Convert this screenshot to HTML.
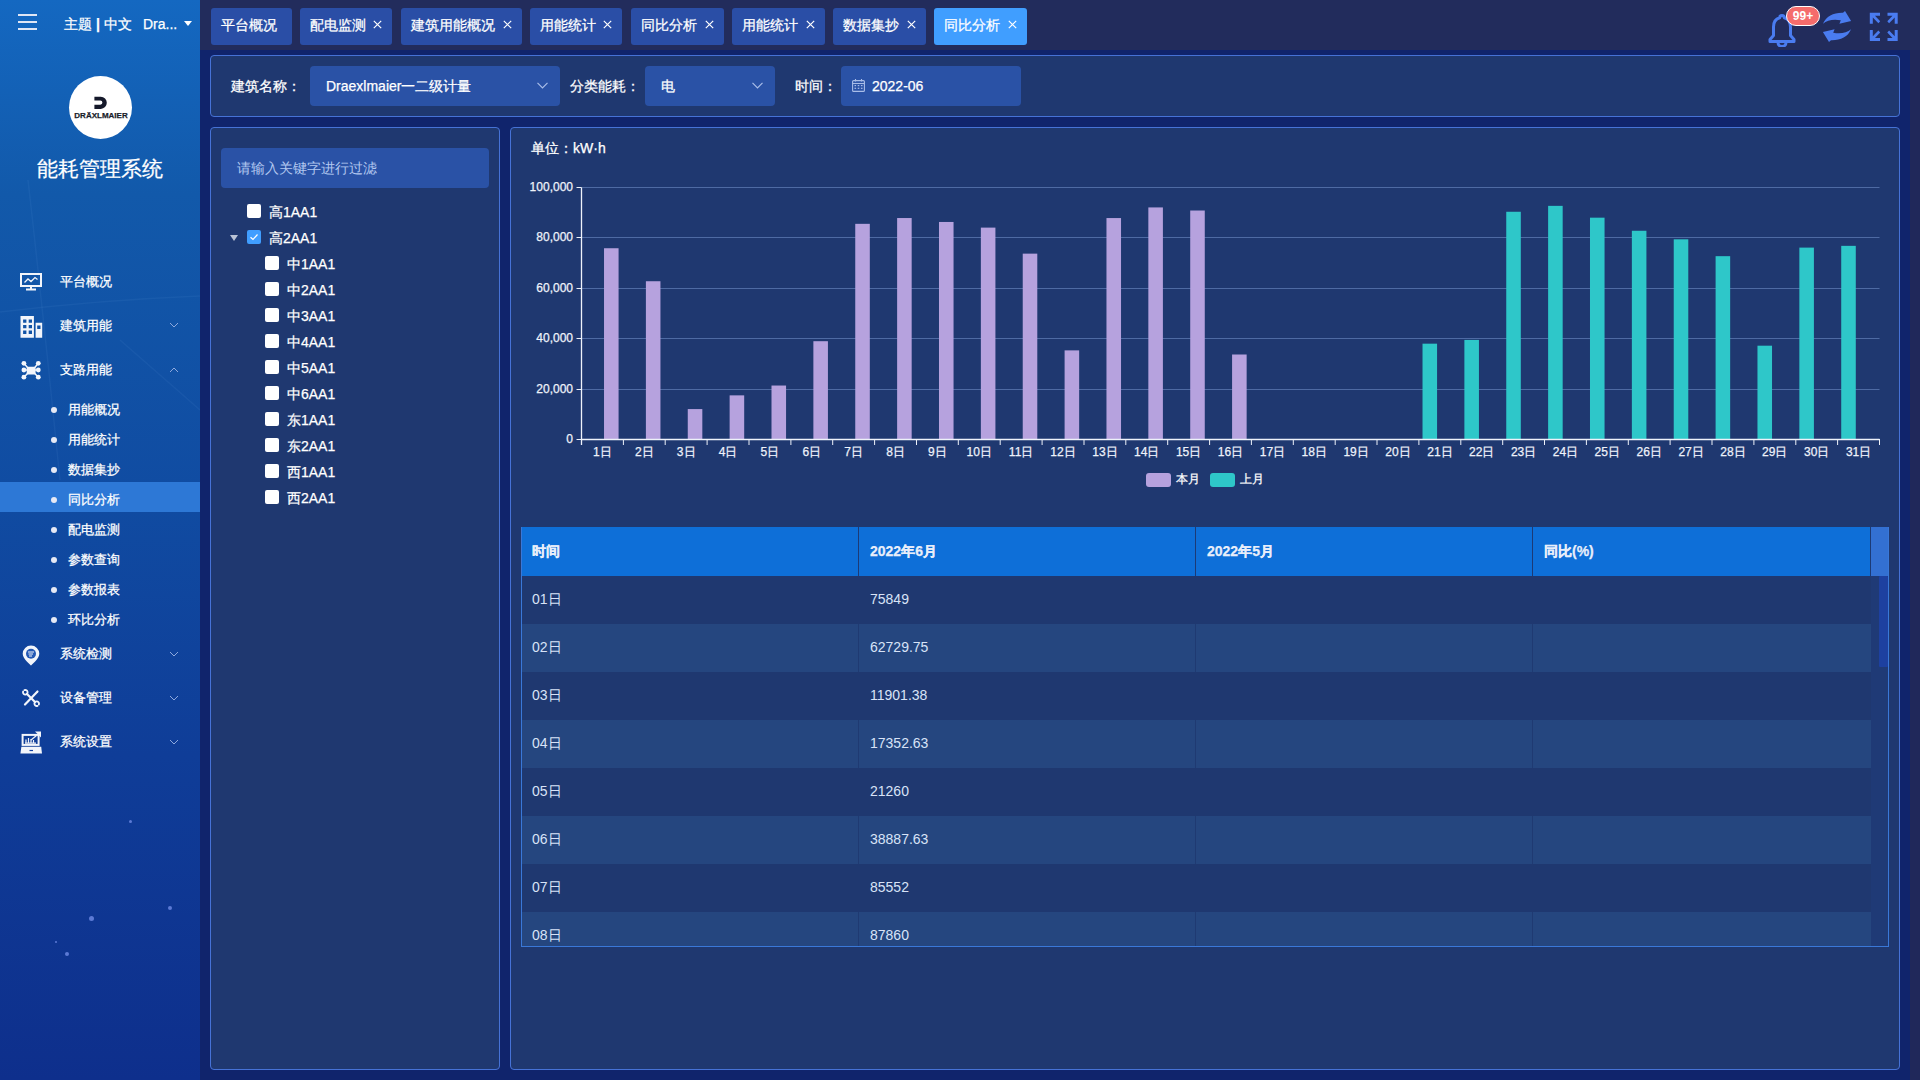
<!DOCTYPE html>
<html><head><meta charset="utf-8">
<style>
*{box-sizing:border-box;margin:0;padding:0}
html,body{width:1920px;height:1080px;overflow:hidden}
body{position:relative;background:#10246c;font-family:"Liberation Sans",sans-serif;color:#fff;-webkit-text-stroke:0.25px currentColor}
.abs{position:absolute}
.t{position:absolute;white-space:nowrap}
#side{left:0;top:0;width:200px;height:1080px;background:linear-gradient(180deg,#1468c1 0%,#1259aa 18%,#104ca2 45%,#0f3d98 70%,#0e2f8c 100%);overflow:hidden}
#hdr{left:200px;top:0;width:1720px;height:50px;background:#222c5c}
#rstrip{left:1910px;top:50px;width:10px;height:1030px;background:#20285a}
.tab{position:absolute;top:8px;height:37px;background:#2a4ea6;border-radius:3px;font-size:14px;line-height:34px;padding-left:10px;color:#fff;white-space:nowrap}
.tab.act{background:#409eff}
.panel{position:absolute;background:#1f3870;border:1px solid #4672d6;border-radius:4px}
.mi{position:absolute;left:60px;font-size:13px;line-height:16px;color:#fff;white-space:nowrap}
.sub{position:absolute;left:68px;font-size:13px;line-height:16px;color:#fff;white-space:nowrap}
.dot{position:absolute;left:51px;width:6px;height:6px;border-radius:3px;background:#e6e9f5}
.chev{position:absolute;left:169px;width:10px;height:10px}
.inp{background:#2a52a6;border-radius:4px}
.cb{position:absolute;width:14px;height:14px;background:#fff;border-radius:2px}
.cb.on{background:#409eff}
.ti{position:absolute;font-size:14px;line-height:16px;white-space:nowrap;color:#fff}
.yl{position:absolute;left:473px;width:100px;text-align:right;font-size:12px;line-height:14px;color:#eef2fa}
.xl{position:absolute;width:50px;text-align:center;font-size:12px;line-height:14px;color:#eef2fa}
.lg{font-size:12px;line-height:16px;color:#fff}
.td{position:absolute;font-size:14px;line-height:16px;color:#d8e3f7;white-space:nowrap;-webkit-text-stroke:0}
.th{position:absolute;font-size:14px;line-height:16px;color:#e8eefa;font-weight:bold;white-space:nowrap}
</style></head><body>
<div id="side" class="abs">
<div class="abs" style="left:18px;top:14px;width:19px;height:2px;background:#dfe6f5"></div>
<div class="abs" style="left:18px;top:21px;width:19px;height:2px;background:#dfe6f5"></div>
<div class="abs" style="left:18px;top:28px;width:19px;height:2px;background:#dfe6f5"></div>
<div class="t" style="left:64px;top:16px;font-size:14px;line-height:16px">主题 <b style="font-weight:bold">|</b> 中文</div>
<div class="t" style="left:143px;top:16px;font-size:14px;line-height:16px">Dra...</div>
<div class="abs" style="left:184px;top:21px;width:0;height:0;border-left:4.5px solid transparent;border-right:4.5px solid transparent;border-top:5px solid #fff"></div>
<div class="abs" style="left:69px;top:76px;width:63px;height:63px;border-radius:50%;background:#fff"></div>
<svg class="abs" style="left:94px;top:96px" width="14" height="14" viewBox="0 0 14 14"><path d="M0.4 0.7H6.8A6 6.1 0 0 1 6.8 12.9H0.4V8.7H6.3A2.1 2.1 0 0 0 6.3 4.5H0.4Z" fill="#15192a"/></svg>
<div class="abs" style="left:73px;top:111px;width:56px;text-align:center;font-size:8px;line-height:9px;font-weight:bold;color:#1a1d2b;letter-spacing:0">DRÄXLMAIER</div>
<svg class="abs" style="left:0;top:0" width="200" height="1080"><g fill="none" stroke="#9fc4ff" stroke-opacity="0.06" stroke-width="1.5"><path d="M28 180Q45 330 60 480"/><path d="M0 312Q100 300 200 296"/><path d="M120 340L200 410"/></g></svg>
<div class="abs" style="left:128.5px;top:819.5px;width:3.0px;height:3.0px;border-radius:50%;background:#6a86e0;opacity:.85"></div>
<div class="abs" style="left:88.5px;top:915.5px;width:5.0px;height:5.0px;border-radius:50%;background:#6a86e0;opacity:.85"></div>
<div class="abs" style="left:168px;top:906px;width:4px;height:4px;border-radius:50%;background:#6a86e0;opacity:.85"></div>
<div class="abs" style="left:55px;top:941px;width:2px;height:2px;border-radius:50%;background:#6a86e0;opacity:.85"></div>
<div class="abs" style="left:65px;top:952px;width:4px;height:4px;border-radius:50%;background:#6a86e0;opacity:.85"></div>
<div class="t" style="left:37px;top:157px;font-size:21px;line-height:24px">能耗管理系统</div>
<svg class="abs" style="left:20px;top:273px" width="22" height="18" viewBox="0 0 22 18"><rect x="1" y="1" width="20" height="12" fill="none" stroke="#f2f5fb" stroke-width="2"/><path d="M4.5 9.5L8 6L11 8.5L15 4.5L17.5 6.5" fill="none" stroke="#f2f5fb" stroke-width="1.3"/><rect x="10" y="13" width="2" height="3" fill="#f2f5fb"/><rect x="6" y="15.5" width="10" height="2" fill="#f2f5fb"/></svg>
<svg class="abs" style="left:20px;top:316px" width="23" height="22" viewBox="0 0 23 22"><path d="M0.5 0H13.9V21.8H0.5Z M3.1 3.4V6.8H6.4V3.4Z M8.7 3.4V6.8H12V3.4Z M3.1 9V12.3H6.4V9Z M8.7 9V12.3H12V9Z M3.1 14.5V17.9H6.4V14.5Z M8.7 14.5V17.9H12V14.5Z" fill="#f2f5fb" fill-rule="evenodd"/><path d="M15.6 6.8H22.2V21.8H15.6Z M17.2 9.5V12.9H20.5V9.5Z" fill="#f2f5fb" fill-rule="evenodd"/></svg>
<svg class="abs" style="left:20px;top:360px" width="22" height="21" viewBox="0 0 22 21"><rect x="6.7" y="6.7" width="8.9" height="7.7" rx="1" fill="#f2f5fb"/><g stroke="#f2f5fb" stroke-width="1.5" fill="none"><path d="M3.9 3.3L7.5 7.5M18.3 3.3L14.8 7.5M3.9 17.2L7.5 13.5M18.3 17.2L14.8 13.5M3.9 10H7M15 10H18.3"/></g><circle cx="3.9" cy="3.3" r="2.4" fill="#f2f5fb"/><circle cx="18.3" cy="3.3" r="2.4" fill="#f2f5fb"/><circle cx="3.9" cy="10" r="2.4" fill="#f2f5fb"/><circle cx="18.3" cy="10" r="2.4" fill="#f2f5fb"/><circle cx="3.9" cy="17.2" r="2.4" fill="#f2f5fb"/><circle cx="18.3" cy="17.2" r="2.4" fill="#f2f5fb"/></svg>
<svg class="abs" style="left:22px;top:645px" width="18" height="21" viewBox="0 0 18 21"><path d="M9 0.5A8.3 8.3 0 0 0 0.7 8.8C0.7 14 9 20.5 9 20.5S17.3 14 17.3 8.8A8.3 8.3 0 0 0 9 0.5Z" fill="#f2f5fb"/><circle cx="9" cy="8.8" r="5" fill="#2358b5"/><path d="M6 7H12M6.5 9H11M7 11H10" stroke="#f2f5fb" stroke-width="1"/></svg>
<svg class="abs" style="left:22px;top:689px" width="18" height="19" viewBox="0 0 18 19"><g stroke="#f2f5fb" stroke-linecap="round" fill="none"><path d="M5 5L13 13" stroke-width="2.2"/><path d="M15.5 2.5L3 15.5" stroke-width="2.2"/><path d="M1.14 2.51A2.3 2.3 0 1 0 2.51 1.14" stroke-width="1.8"/><path d="M16.86 15.49A2.3 2.3 0 1 0 15.49 16.86" stroke-width="1.8"/></g></svg>
<svg class="abs" style="left:20px;top:730px" width="23" height="25" viewBox="0 0 23 25"><rect x="2.6" y="4.9" width="16" height="10" fill="none" stroke="#f2f5fb" stroke-width="2"/><path d="M6 13V9.5M8.5 13V8M11 13V9M13.5 13V10M5 13.2H16" stroke="#f2f5fb" stroke-width="1.2"/><path d="M11 10L16.5 5.5" stroke="#f2f5fb" stroke-width="1.2"/><path d="M15 1.5H21V7.5Z" fill="#f2f5fb"/><path d="M1.4 16.7H21.2L22 23.6H0.4Z" fill="#f2f5fb"/><path d="M9.5 20.5H13" stroke="#1240a0" stroke-width="1.2"/></svg>
<div class="mi" style="top:274px">平台概况</div>
<div class="mi" style="top:318px">建筑用能</div>
<div class="mi" style="top:362px">支路用能</div>
<div class="mi" style="top:646px">系统检测</div>
<div class="mi" style="top:690px">设备管理</div>
<div class="mi" style="top:734px">系统设置</div>
<svg class="chev" style="top:320px" viewBox="0 0 10 10"><path d="M1 3L5 7L9 3" fill="none" stroke="#8ea9de" stroke-width="1"/></svg><svg class="chev" style="top:365px" viewBox="0 0 10 10"><path d="M1 7L5 3L9 7" fill="none" stroke="#8ea9de" stroke-width="1"/></svg><svg class="chev" style="top:649px" viewBox="0 0 10 10"><path d="M1 3L5 7L9 3" fill="none" stroke="#8ea9de" stroke-width="1"/></svg><svg class="chev" style="top:693px" viewBox="0 0 10 10"><path d="M1 3L5 7L9 3" fill="none" stroke="#8ea9de" stroke-width="1"/></svg><svg class="chev" style="top:737px" viewBox="0 0 10 10"><path d="M1 3L5 7L9 3" fill="none" stroke="#8ea9de" stroke-width="1"/></svg>
<div class="abs" style="left:0;top:482px;width:200px;height:30px;background:#2d78d6"></div>
<div class="dot" style="top:407px"></div><div class="sub" style="top:402px">用能概况</div>
<div class="dot" style="top:437px"></div><div class="sub" style="top:432px">用能统计</div>
<div class="dot" style="top:467px"></div><div class="sub" style="top:462px">数据集抄</div>
<div class="dot" style="top:497px"></div><div class="sub" style="top:492px">同比分析</div>
<div class="dot" style="top:527px"></div><div class="sub" style="top:522px">配电监测</div>
<div class="dot" style="top:557px"></div><div class="sub" style="top:552px">参数查询</div>
<div class="dot" style="top:587px"></div><div class="sub" style="top:582px">参数报表</div>
<div class="dot" style="top:617px"></div><div class="sub" style="top:612px">环比分析</div>
</div>
<div id="hdr" class="abs">
<div class="tab" style="left:11px;width:81px">平台概况</div>
<div class="tab" style="left:100px;width:92px">配电监测<svg class="abs" style="right:10px;top:12px" width="9" height="9" viewBox="0 0 9 9"><path d="M0.8 0.8L8.2 8.2M8.2 0.8L0.8 8.2" stroke="#fff" stroke-width="1.2"/></svg></div>
<div class="tab" style="left:201px;width:121px">建筑用能概况<svg class="abs" style="right:10px;top:12px" width="9" height="9" viewBox="0 0 9 9"><path d="M0.8 0.8L8.2 8.2M8.2 0.8L0.8 8.2" stroke="#fff" stroke-width="1.2"/></svg></div>
<div class="tab" style="left:330px;width:92px">用能统计<svg class="abs" style="right:10px;top:12px" width="9" height="9" viewBox="0 0 9 9"><path d="M0.8 0.8L8.2 8.2M8.2 0.8L0.8 8.2" stroke="#fff" stroke-width="1.2"/></svg></div>
<div class="tab" style="left:431px;width:93px">同比分析<svg class="abs" style="right:10px;top:12px" width="9" height="9" viewBox="0 0 9 9"><path d="M0.8 0.8L8.2 8.2M8.2 0.8L0.8 8.2" stroke="#fff" stroke-width="1.2"/></svg></div>
<div class="tab" style="left:532px;width:93px">用能统计<svg class="abs" style="right:10px;top:12px" width="9" height="9" viewBox="0 0 9 9"><path d="M0.8 0.8L8.2 8.2M8.2 0.8L0.8 8.2" stroke="#fff" stroke-width="1.2"/></svg></div>
<div class="tab" style="left:633px;width:93px">数据集抄<svg class="abs" style="right:10px;top:12px" width="9" height="9" viewBox="0 0 9 9"><path d="M0.8 0.8L8.2 8.2M8.2 0.8L0.8 8.2" stroke="#fff" stroke-width="1.2"/></svg></div>
<div class="tab act" style="left:734px;width:93px">同比分析<svg class="abs" style="right:10px;top:12px" width="9" height="9" viewBox="0 0 9 9"><path d="M0.8 0.8L8.2 8.2M8.2 0.8L0.8 8.2" stroke="#fff" stroke-width="1.2"/></svg></div>
<svg class="abs" style="left:1568px;top:13px" width="28" height="34" viewBox="0 0 28 34"><path d="M14 2.5C15.5 2.5 16.3 3.5 16.3 4.8C20.5 6 22.5 9.5 22.5 14V22.5L26 26.5V28.5H2V26.5L5.5 22.5V14C5.5 9.5 7.5 6 11.7 4.8C11.7 3.5 12.5 2.5 14 2.5Z" fill="none" stroke="#4a7cf0" stroke-width="3" stroke-linejoin="round"/><path d="M10 29.5A4 4 0 0 0 18 29.5" fill="none" stroke="#4a7cf0" stroke-width="3"/></svg>
<div class="abs" style="left:1586px;top:6px;width:34px;height:20px;border-radius:10px;background:#f56c6c;border:1px solid #fff;font-size:12px;line-height:18px;text-align:center;color:#fff;font-weight:bold;-webkit-text-stroke:0">99+</div>
<svg class="abs" style="left:1622px;top:10px" width="30" height="34" viewBox="0 0 30 34"><path d="M1 13.8C4 6 12 2.5 21 2.8L23 0.9L29.1 10.9L17.4 13.8L18.8 10.3C12 8.8 5 10 1 13.8Z" fill="#4a7cf0"/><path d="M29 19.2C26 27 18 30.5 9 30.2L7 32.1L0.9 22.1L12.6 19.2L11.2 22.7C18 24.2 25 23 29 19.2Z" fill="#4a7cf0"/></svg>
<svg class="abs" style="left:1669px;top:12px" width="30" height="30" viewBox="0 0 30 30"><g fill="#4a7cf0"><path id="q" d="M0.8 0.7H11V3.7H6L11.2 9.2L9.4 11.2L3.8 5.6V11.7H0.8Z"/><path d="M0.8 0.7H11V3.7H6L11.2 9.2L9.4 11.2L3.8 5.6V11.7H0.8Z" transform="translate(29.5,0) scale(-1,1)"/><path d="M0.8 0.7H11V3.7H6L11.2 9.2L9.4 11.2L3.8 5.6V11.7H0.8Z" transform="translate(0,29.8) scale(1,-1)"/><path d="M0.8 0.7H11V3.7H6L11.2 9.2L9.4 11.2L3.8 5.6V11.7H0.8Z" transform="translate(29.5,29.8) scale(-1,-1)"/></g></svg>
</div>
<div class="panel" style="left:210px;top:55px;width:1690px;height:62px"></div>
<div class="t" style="left:231px;top:78px;font-size:14px;line-height:16px">建筑名称：</div>
<div class="abs inp" style="left:310px;top:66px;width:250px;height:40px"></div>
<div class="t" style="left:326px;top:78px;font-size:14px;line-height:16px">Draexlmaier一二级计量</div>
<svg class="abs" style="left:537px;top:82px" width="11" height="7" viewBox="0 0 11 7"><path d="M0.5 0.8L5.5 5.8L10.5 0.8" fill="none" stroke="#a9bde8" stroke-width="1.2"/></svg>
<div class="t" style="left:570px;top:78px;font-size:14px;line-height:16px">分类能耗：</div>
<div class="abs inp" style="left:645px;top:66px;width:130px;height:40px"></div>
<div class="t" style="left:661px;top:78px;font-size:14px;line-height:16px">电</div>
<svg class="abs" style="left:752px;top:82px" width="11" height="7" viewBox="0 0 11 7"><path d="M0.5 0.8L5.5 5.8L10.5 0.8" fill="none" stroke="#a9bde8" stroke-width="1.2"/></svg>
<div class="t" style="left:795px;top:78px;font-size:14px;line-height:16px">时间：</div>
<div class="abs inp" style="left:841px;top:66px;width:180px;height:40px"></div>
<svg class="abs" style="left:852px;top:79px" width="13" height="13" viewBox="0 0 13 13"><rect x="0.6" y="1.6" width="11.8" height="10.8" rx="1" fill="none" stroke="#a9bde8" stroke-width="1.1"/><path d="M0.6 4.5H12.4" stroke="#a9bde8" stroke-width="1.1"/><path d="M3.5 0V2.5M9.5 0V2.5" stroke="#a9bde8" stroke-width="1.1"/><g fill="#a9bde8"><rect x="2.5" y="6" width="1.6" height="1.2"/><rect x="5.7" y="6" width="1.6" height="1.2"/><rect x="8.9" y="6" width="1.6" height="1.2"/><rect x="2.5" y="8.7" width="1.6" height="1.2"/><rect x="5.7" y="8.7" width="1.6" height="1.2"/><rect x="8.9" y="8.7" width="1.6" height="1.2"/></g></svg>
<div class="t" style="left:872px;top:78px;font-size:14px;line-height:16px">2022-06</div>
<div class="panel" style="left:210px;top:127px;width:290px;height:943px"></div>
<div class="abs inp" style="left:221px;top:148px;width:268px;height:40px"></div>
<div class="t" style="left:237px;top:160px;font-size:14px;line-height:16px;color:#b3c8f0;-webkit-text-stroke:0">请输入关键字进行过滤</div>
<div class="cb" style="left:247px;top:204px"></div><div class="ti" style="left:269px;top:204px">高1AA1</div>
<div class="abs" style="left:230px;top:235px;width:0;height:0;border-left:4.5px solid transparent;border-right:4.5px solid transparent;border-top:6px solid #b9c3d6"></div>
<div class="cb on" style="left:247px;top:230px"><svg width="14" height="14" viewBox="0 0 14 14" style="position:absolute;left:0;top:0"><path d="M3.5 7.2L6 9.5L10.5 4.5" fill="none" stroke="#fff" stroke-width="1.2"/></svg></div><div class="ti" style="left:269px;top:230px">高2AA1</div>
<div class="cb" style="left:265px;top:256px"></div><div class="ti" style="left:287px;top:256px">中1AA1</div>
<div class="cb" style="left:265px;top:282px"></div><div class="ti" style="left:287px;top:282px">中2AA1</div>
<div class="cb" style="left:265px;top:308px"></div><div class="ti" style="left:287px;top:308px">中3AA1</div>
<div class="cb" style="left:265px;top:334px"></div><div class="ti" style="left:287px;top:334px">中4AA1</div>
<div class="cb" style="left:265px;top:360px"></div><div class="ti" style="left:287px;top:360px">中5AA1</div>
<div class="cb" style="left:265px;top:386px"></div><div class="ti" style="left:287px;top:386px">中6AA1</div>
<div class="cb" style="left:265px;top:412px"></div><div class="ti" style="left:287px;top:412px">东1AA1</div>
<div class="cb" style="left:265px;top:438px"></div><div class="ti" style="left:287px;top:438px">东2AA1</div>
<div class="cb" style="left:265px;top:464px"></div><div class="ti" style="left:287px;top:464px">西1AA1</div>
<div class="cb" style="left:265px;top:490px"></div><div class="ti" style="left:287px;top:490px">西2AA1</div>
<div class="panel" style="left:510px;top:127px;width:1390px;height:943px"></div>
<div class="t" style="left:531px;top:140px;font-size:14px;line-height:16px">单位：kW·h</div>
<svg class="abs" style="left:0;top:0" width="1920" height="1080" viewBox="0 0 1920 1080"><line x1="581.5" y1="389.5" x2="1879.5" y2="389.5" stroke="#4e6aa3" stroke-width="1"/><line x1="581.5" y1="338.5" x2="1879.5" y2="338.5" stroke="#4e6aa3" stroke-width="1"/><line x1="581.5" y1="288.5" x2="1879.5" y2="288.5" stroke="#4e6aa3" stroke-width="1"/><line x1="581.5" y1="237.5" x2="1879.5" y2="237.5" stroke="#4e6aa3" stroke-width="1"/><line x1="581.5" y1="187.5" x2="1879.5" y2="187.5" stroke="#4e6aa3" stroke-width="1"/><rect x="604.02" y="248.24" width="14.56" height="190.76" fill="#b6a2de"/><rect x="645.89" y="281.23" width="14.56" height="157.77" fill="#b6a2de"/><rect x="687.76" y="409.07" width="14.56" height="29.93" fill="#b6a2de"/><rect x="729.63" y="395.36" width="14.56" height="43.64" fill="#b6a2de"/><rect x="771.50" y="385.53" width="14.56" height="53.47" fill="#b6a2de"/><rect x="813.37" y="341.20" width="14.56" height="97.80" fill="#b6a2de"/><rect x="855.25" y="223.84" width="14.56" height="215.16" fill="#b6a2de"/><rect x="897.12" y="218.03" width="14.56" height="220.97" fill="#b6a2de"/><rect x="938.99" y="221.96" width="14.56" height="217.04" fill="#b6a2de"/><rect x="980.86" y="227.61" width="14.56" height="211.39" fill="#b6a2de"/><rect x="1022.73" y="253.64" width="14.56" height="185.36" fill="#b6a2de"/><rect x="1064.60" y="350.37" width="14.56" height="88.63" fill="#b6a2de"/><rect x="1106.47" y="218.06" width="14.56" height="220.94" fill="#b6a2de"/><rect x="1148.34" y="207.42" width="14.56" height="231.58" fill="#b6a2de"/><rect x="1190.21" y="210.51" width="14.56" height="228.49" fill="#b6a2de"/><rect x="1232.08" y="354.50" width="14.56" height="84.50" fill="#b6a2de"/><rect x="1422.51" y="343.68" width="14.56" height="95.32" fill="#2ec7c9"/><rect x="1464.38" y="339.91" width="14.56" height="99.09" fill="#2ec7c9"/><rect x="1506.25" y="211.77" width="14.56" height="227.23" fill="#2ec7c9"/><rect x="1548.12" y="205.86" width="14.56" height="233.14" fill="#2ec7c9"/><rect x="1589.99" y="217.68" width="14.56" height="221.32" fill="#2ec7c9"/><rect x="1631.86" y="230.76" width="14.56" height="208.24" fill="#2ec7c9"/><rect x="1673.73" y="239.31" width="14.56" height="199.69" fill="#2ec7c9"/><rect x="1715.60" y="256.16" width="14.56" height="182.84" fill="#2ec7c9"/><rect x="1757.47" y="345.69" width="14.56" height="93.31" fill="#2ec7c9"/><rect x="1799.35" y="247.61" width="14.56" height="191.39" fill="#2ec7c9"/><rect x="1841.22" y="245.85" width="14.56" height="193.15" fill="#2ec7c9"/><line x1="581.5" y1="187.5" x2="581.5" y2="445.0" stroke="#eef2fa" stroke-width="1.3"/><line x1="581.5" y1="439.5" x2="1879.5" y2="439.5" stroke="#eef2fa" stroke-width="1.3"/><line x1="576.5" y1="439.5" x2="581.5" y2="439.5" stroke="#eef2fa" stroke-width="1"/><line x1="576.5" y1="389.5" x2="581.5" y2="389.5" stroke="#eef2fa" stroke-width="1"/><line x1="576.5" y1="338.5" x2="581.5" y2="338.5" stroke="#eef2fa" stroke-width="1"/><line x1="576.5" y1="288.5" x2="581.5" y2="288.5" stroke="#eef2fa" stroke-width="1"/><line x1="576.5" y1="237.5" x2="581.5" y2="237.5" stroke="#eef2fa" stroke-width="1"/><line x1="576.5" y1="187.5" x2="581.5" y2="187.5" stroke="#eef2fa" stroke-width="1"/><line x1="581.5" y1="439" x2="581.5" y2="445" stroke="#eef2fa" stroke-width="1"/><line x1="623.4" y1="439" x2="623.4" y2="445" stroke="#eef2fa" stroke-width="1"/><line x1="665.2" y1="439" x2="665.2" y2="445" stroke="#eef2fa" stroke-width="1"/><line x1="707.1" y1="439" x2="707.1" y2="445" stroke="#eef2fa" stroke-width="1"/><line x1="749.0" y1="439" x2="749.0" y2="445" stroke="#eef2fa" stroke-width="1"/><line x1="790.9" y1="439" x2="790.9" y2="445" stroke="#eef2fa" stroke-width="1"/><line x1="832.7" y1="439" x2="832.7" y2="445" stroke="#eef2fa" stroke-width="1"/><line x1="874.6" y1="439" x2="874.6" y2="445" stroke="#eef2fa" stroke-width="1"/><line x1="916.5" y1="439" x2="916.5" y2="445" stroke="#eef2fa" stroke-width="1"/><line x1="958.3" y1="439" x2="958.3" y2="445" stroke="#eef2fa" stroke-width="1"/><line x1="1000.2" y1="439" x2="1000.2" y2="445" stroke="#eef2fa" stroke-width="1"/><line x1="1042.1" y1="439" x2="1042.1" y2="445" stroke="#eef2fa" stroke-width="1"/><line x1="1084.0" y1="439" x2="1084.0" y2="445" stroke="#eef2fa" stroke-width="1"/><line x1="1125.8" y1="439" x2="1125.8" y2="445" stroke="#eef2fa" stroke-width="1"/><line x1="1167.7" y1="439" x2="1167.7" y2="445" stroke="#eef2fa" stroke-width="1"/><line x1="1209.6" y1="439" x2="1209.6" y2="445" stroke="#eef2fa" stroke-width="1"/><line x1="1251.4" y1="439" x2="1251.4" y2="445" stroke="#eef2fa" stroke-width="1"/><line x1="1293.3" y1="439" x2="1293.3" y2="445" stroke="#eef2fa" stroke-width="1"/><line x1="1335.2" y1="439" x2="1335.2" y2="445" stroke="#eef2fa" stroke-width="1"/><line x1="1377.0" y1="439" x2="1377.0" y2="445" stroke="#eef2fa" stroke-width="1"/><line x1="1418.9" y1="439" x2="1418.9" y2="445" stroke="#eef2fa" stroke-width="1"/><line x1="1460.8" y1="439" x2="1460.8" y2="445" stroke="#eef2fa" stroke-width="1"/><line x1="1502.7" y1="439" x2="1502.7" y2="445" stroke="#eef2fa" stroke-width="1"/><line x1="1544.5" y1="439" x2="1544.5" y2="445" stroke="#eef2fa" stroke-width="1"/><line x1="1586.4" y1="439" x2="1586.4" y2="445" stroke="#eef2fa" stroke-width="1"/><line x1="1628.3" y1="439" x2="1628.3" y2="445" stroke="#eef2fa" stroke-width="1"/><line x1="1670.1" y1="439" x2="1670.1" y2="445" stroke="#eef2fa" stroke-width="1"/><line x1="1712.0" y1="439" x2="1712.0" y2="445" stroke="#eef2fa" stroke-width="1"/><line x1="1753.9" y1="439" x2="1753.9" y2="445" stroke="#eef2fa" stroke-width="1"/><line x1="1795.8" y1="439" x2="1795.8" y2="445" stroke="#eef2fa" stroke-width="1"/><line x1="1837.6" y1="439" x2="1837.6" y2="445" stroke="#eef2fa" stroke-width="1"/><line x1="1879.5" y1="439" x2="1879.5" y2="445" stroke="#eef2fa" stroke-width="1"/></svg>
<div class="yl" style="top:432.0px">0</div>
<div class="yl" style="top:382.0px">20,000</div>
<div class="yl" style="top:331.0px">40,000</div>
<div class="yl" style="top:281.0px">60,000</div>
<div class="yl" style="top:230.0px">80,000</div>
<div class="yl" style="top:180.0px">100,000</div>
<div class="xl" style="left:577.4px;top:445px">1日</div>
<div class="xl" style="left:619.3px;top:445px">2日</div>
<div class="xl" style="left:661.2px;top:445px">3日</div>
<div class="xl" style="left:703.0px;top:445px">4日</div>
<div class="xl" style="left:744.9px;top:445px">5日</div>
<div class="xl" style="left:786.8px;top:445px">6日</div>
<div class="xl" style="left:828.7px;top:445px">7日</div>
<div class="xl" style="left:870.5px;top:445px">8日</div>
<div class="xl" style="left:912.4px;top:445px">9日</div>
<div class="xl" style="left:954.3px;top:445px">10日</div>
<div class="xl" style="left:996.1px;top:445px">11日</div>
<div class="xl" style="left:1038.0px;top:445px">12日</div>
<div class="xl" style="left:1079.9px;top:445px">13日</div>
<div class="xl" style="left:1121.8px;top:445px">14日</div>
<div class="xl" style="left:1163.6px;top:445px">15日</div>
<div class="xl" style="left:1205.5px;top:445px">16日</div>
<div class="xl" style="left:1247.4px;top:445px">17日</div>
<div class="xl" style="left:1289.2px;top:445px">18日</div>
<div class="xl" style="left:1331.1px;top:445px">19日</div>
<div class="xl" style="left:1373.0px;top:445px">20日</div>
<div class="xl" style="left:1414.9px;top:445px">21日</div>
<div class="xl" style="left:1456.7px;top:445px">22日</div>
<div class="xl" style="left:1498.6px;top:445px">23日</div>
<div class="xl" style="left:1540.5px;top:445px">24日</div>
<div class="xl" style="left:1582.3px;top:445px">25日</div>
<div class="xl" style="left:1624.2px;top:445px">26日</div>
<div class="xl" style="left:1666.1px;top:445px">27日</div>
<div class="xl" style="left:1708.0px;top:445px">28日</div>
<div class="xl" style="left:1749.8px;top:445px">29日</div>
<div class="xl" style="left:1791.7px;top:445px">30日</div>
<div class="xl" style="left:1833.6px;top:445px">31日</div>
<div class="abs" style="left:1146px;top:473px;width:25px;height:14px;border-radius:3px;background:#b6a2de"></div>
<div class="abs lg" style="left:1176px;top:471px">本月</div>
<div class="abs" style="left:1210px;top:473px;width:25px;height:14px;border-radius:3px;background:#2ec7c9"></div>
<div class="abs lg" style="left:1240px;top:471px">上月</div>
<div class="abs" style="left:521px;top:527px;width:1368px;height:420px;border:1px solid #3a78d8;border-top:none;overflow:hidden"><div class="abs" style="left:0;top:0;width:1349px;height:49px;background:#0e6fd8"></div><div class="abs" style="left:1349px;top:0;width:17px;height:49px;background:#3370d2"></div><div class="abs" style="left:0;top:49px;width:1349px;height:48px;background:#1f3870"></div><div class="td" style="left:10px;top:64px">01日</div><div class="td" style="left:348px;top:64px">75849</div><div class="abs" style="left:0;top:97px;width:1349px;height:48px;background:#25467f"></div><div class="abs" style="left:335.5px;top:97px;width:1px;height:48px;background:#1f3a72"></div><div class="abs" style="left:672.5px;top:97px;width:1px;height:48px;background:#1f3a72"></div><div class="abs" style="left:1009.5px;top:97px;width:1px;height:48px;background:#1f3a72"></div><div class="td" style="left:10px;top:112px">02日</div><div class="td" style="left:348px;top:112px">62729.75</div><div class="abs" style="left:0;top:145px;width:1349px;height:48px;background:#1f3870"></div><div class="td" style="left:10px;top:160px">03日</div><div class="td" style="left:348px;top:160px">11901.38</div><div class="abs" style="left:0;top:193px;width:1349px;height:48px;background:#25467f"></div><div class="abs" style="left:335.5px;top:193px;width:1px;height:48px;background:#1f3a72"></div><div class="abs" style="left:672.5px;top:193px;width:1px;height:48px;background:#1f3a72"></div><div class="abs" style="left:1009.5px;top:193px;width:1px;height:48px;background:#1f3a72"></div><div class="td" style="left:10px;top:208px">04日</div><div class="td" style="left:348px;top:208px">17352.63</div><div class="abs" style="left:0;top:241px;width:1349px;height:48px;background:#1f3870"></div><div class="td" style="left:10px;top:256px">05日</div><div class="td" style="left:348px;top:256px">21260</div><div class="abs" style="left:0;top:289px;width:1349px;height:48px;background:#25467f"></div><div class="abs" style="left:335.5px;top:289px;width:1px;height:48px;background:#1f3a72"></div><div class="abs" style="left:672.5px;top:289px;width:1px;height:48px;background:#1f3a72"></div><div class="abs" style="left:1009.5px;top:289px;width:1px;height:48px;background:#1f3a72"></div><div class="td" style="left:10px;top:304px">06日</div><div class="td" style="left:348px;top:304px">38887.63</div><div class="abs" style="left:0;top:337px;width:1349px;height:48px;background:#1f3870"></div><div class="td" style="left:10px;top:352px">07日</div><div class="td" style="left:348px;top:352px">85552</div><div class="abs" style="left:0;top:385px;width:1349px;height:48px;background:#25467f"></div><div class="abs" style="left:335.5px;top:385px;width:1px;height:48px;background:#1f3a72"></div><div class="abs" style="left:672.5px;top:385px;width:1px;height:48px;background:#1f3a72"></div><div class="abs" style="left:1009.5px;top:385px;width:1px;height:48px;background:#1f3a72"></div><div class="td" style="left:10px;top:400px">08日</div><div class="td" style="left:348px;top:400px">87860</div><div class="abs" style="left:335.5px;top:0;width:1px;height:49px;background:#1c3a76"></div><div class="abs" style="left:672.5px;top:0;width:1px;height:49px;background:#1c3a76"></div><div class="abs" style="left:1009.5px;top:0;width:1px;height:49px;background:#1c3a76"></div><div class="abs" style="left:1348px;top:0;width:1px;height:49px;background:#1c3a76"></div><div class="th" style="left:10px;top:16px">时间</div><div class="th" style="left:348px;top:16px">2022年6月</div><div class="th" style="left:685px;top:16px">2022年5月</div><div class="th" style="left:1022px;top:16px">同比(%)</div><div class="abs" style="left:1349px;top:49px;width:17px;height:372px;background:#1f3a76"></div><div class="abs" style="left:1357px;top:49px;width:9px;height:91px;background:#1d40a0;border-radius:1px"></div></div>
<div id="rstrip" class="abs"></div>
</body></html>
